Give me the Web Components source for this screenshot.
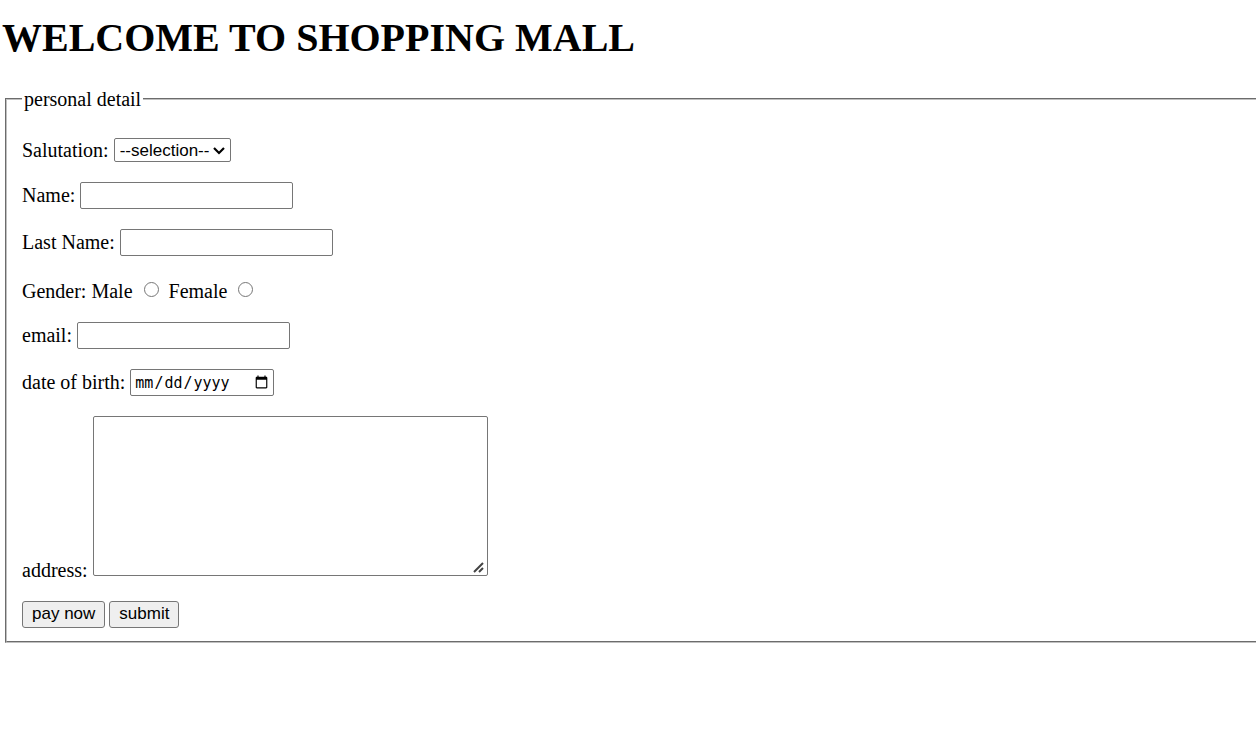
<!DOCTYPE html>
<html lang="en">
<head>
<meta charset="utf-8">
<title>Shopping Mall</title>
<style>
  html { background: #fff; }
  body { margin: 0; overflow-x: hidden; color: #000; font: 20px/20px "Liberation Serif", "Times New Roman", serif; }
</style>
</head>
<body>
<mall-page>
  <span slot="title">WELCOME TO SHOPPING MALL</span>
  <form-section>
    <span slot="legend">personal detail</span>
    <select-field label="Salutation:" name="salutation"></select-field>
    <text-field label="Name:" name="name"></text-field>
    <text-field label="Last Name:" name="last-name"></text-field>
    <gender-field></gender-field>
    <text-field label="email:" name="email" type="email"></text-field>
    <text-field label="date of birth:" name="dob" type="date"></text-field>
    <address-field label="address:"></address-field>
    <form-actions></form-actions>
  </form-section>
</mall-page>

<script>
  const rowStyle = `
    :host { display: flex; align-items: center; gap: 5px; }
    label { padding-bottom: 1px; }
    input, select, textarea, button {
      box-sizing: border-box; margin: 0; color: #000; background: #fff;
      border: 1px solid #767676; border-radius: 2px;
      font: 17px "Liberation Sans", Arial, sans-serif;
    }
  `;

  class BaseElement extends HTMLElement {
    constructor() {
      super();
      this.attachShadow({ mode: "open" });
    }
    connectedCallback() {
      this.shadowRoot.innerHTML = this.render();
    }
  }

  customElements.define("mall-page", class extends BaseElement {
    render() {
      return `<style>
        :host { display: block; padding: 15px 0 24px 2px; }
        h1 { margin: 0 0 28px; font-size: 40px; line-height: 46px; font-weight: bold; }
      </style>
      <h1><slot name="title"></slot></h1>
      <main><slot></slot></main>`;
    }
  });

  customElements.define("form-section", class extends BaseElement {
    render() {
      return `<style>
        :host { display: block; }
        fieldset { min-width: 0; margin: 0 -4px 0 3px; padding: 0 15px 13px; border: 2px groove #c0c0c0; }
        legend { padding: 0 2px; }
        .rows { display: flex; flex-direction: column; gap: 20px; padding-top: 29px; }
      </style>
      <form><fieldset>
        <legend><slot name="legend"></slot></legend>
        <div class="rows"><slot></slot></div>
      </fieldset></form>`;
    }
  });

  customElements.define("select-field", class extends BaseElement {
    render() {
      return `<style>${rowStyle}
        .box { position: relative; display: flex; }
        select { appearance: none; height: 24px; width: 117px; padding: 0 20px 0 5px; }
        svg { position: absolute; right: 5px; top: 8px; pointer-events: none; }
      </style>
      <label for="control">${this.getAttribute("label")}</label>
      <span class="box">
        <select id="control" name="${this.getAttribute("name")}">
          <option>--selection--</option><option>Mr</option><option>Mrs</option><option>Miss</option>
        </select>
        <svg width="14" height="10" viewBox="0 0 14 10" aria-hidden="true">
          <path d="M2 2 L7 7 L12 2" fill="none" stroke="#000" stroke-width="2.2"/>
        </svg>
      </span>`;
    }
  });

  customElements.define("text-field", class extends BaseElement {
    render() {
      return `<style>${rowStyle}
        input { width: 213px; height: 27px; padding: 1px 3px; }
        input[type="date"] { width: 144px; font: 15px "DejaVu Sans Mono", monospace; }
        input::-webkit-calendar-picker-indicator { width: 17px; height: 17px; padding: 1px; box-sizing: border-box; }
      </style>
      <label for="control">${this.getAttribute("label")}</label>
      <input id="control" type="${this.getAttribute("type") || "text"}" name="${this.getAttribute("name")}">`;
    }
  });

  customElements.define("gender-field", class extends BaseElement {
    render() {
      return `<style>${rowStyle}
        :host { height: 26px; }
        .title, label { padding-top: 3px; padding-bottom: 0; }
        .option { display: flex; align-items: center; }
        input { width: 15px; height: 15px; margin: 0 5px 0 11px; }
      </style>
      <span class="title">Gender:</span>
      <span class="option"><label for="male">Male</label><input id="male" type="radio" name="gender"></span>
      <span class="option"><label for="female">Female</label><input id="female" type="radio" name="gender"></span>`;
    }
  });

  customElements.define("address-field", class extends BaseElement {
    render() {
      return `<style>${rowStyle}
        :host { align-items: flex-end; }
        textarea { width: 395px; height: 160px; margin-bottom: 5px; padding: 3px; resize: both; }
        textarea::-webkit-resizer {
          background: url("data:image/svg+xml,%3Csvg xmlns='http://www.w3.org/2000/svg' width='15' height='15'%3E%3Cpath d='M2 12 L11 3 M7 12 L11 8' fill='none' stroke='%23444' stroke-width='2'/%3E%3C/svg%3E") no-repeat;
        }
      </style>
      <label for="control">${this.getAttribute("label")}</label>
      <textarea id="control" name="address"></textarea>`;
    }
  });

  customElements.define("form-actions", class extends BaseElement {
    render() {
      return `<style>${rowStyle}
        :host { gap: 4px; }
        button { height: 27px; padding: 0 9px 1px; background: #efefef; border-radius: 3px; }
      </style>
      <button type="button">pay now</button>
      <button type="submit">submit</button>`;
    }
  });
</script>
</body>
</html>
